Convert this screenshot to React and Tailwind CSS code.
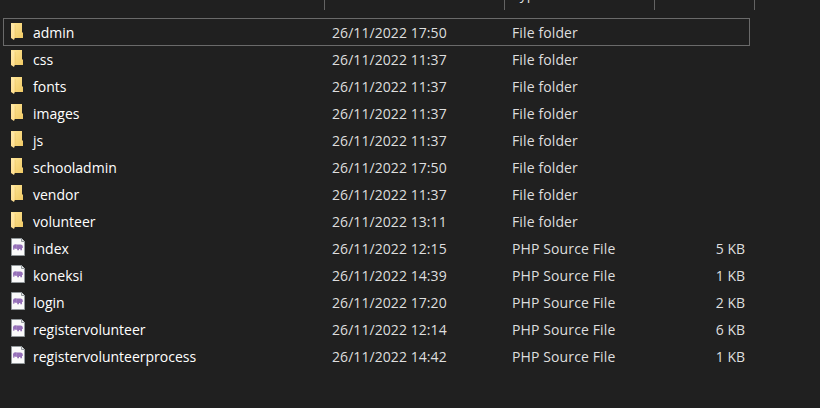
const files = [
  { name: "admin", date: "26/11/2022 17:50", selected: true },
  { name: "css", date: "26/11/2022 11:37" },
  { name: "fonts", date: "26/11/2022 11:37" },
  { name: "images", date: "26/11/2022 11:37" },
  { name: "js", date: "26/11/2022 11:37" },
  { name: "schooladmin", date: "26/11/2022 17:50" },
  { name: "vendor", date: "26/11/2022 11:37" },
  { name: "volunteer", date: "26/11/2022 13:11" },
  { name: "index", date: "26/11/2022 12:15", size: "5 KB" },
  { name: "koneksi", date: "26/11/2022 14:39", size: "1 KB" },
  { name: "login", date: "26/11/2022 17:20", size: "2 KB" },
  { name: "registervolunteer", date: "26/11/2022 12:14", size: "6 KB" },
  { name: "registervolunteerprocess", date: "26/11/2022 14:42", size: "1 KB" },
];

function FolderIcon() {
  return (
    <svg width="15" height="18" viewBox="0 0 15 18" className="block">
      <defs>
        <linearGradient id="folder-back" x1="0" y1="0" x2="1" y2="1">
          <stop offset="0" stopColor="#ffe596" />
          <stop offset="1" stopColor="#f0ca66" />
        </linearGradient>
        <linearGradient id="folder-flap" x1="0" y1="0" x2="0" y2="1">
          <stop offset="0" stopColor="#ffe9aa" />
          <stop offset="1" stopColor="#ffdf91" />
        </linearGradient>
      </defs>
      <path d="M0 0H11V9L12 10V15H0Z" fill="url(#folder-back)" />
      <path d="M0 0L4 2V14.5L3 17L0 15Z" fill="url(#folder-flap)" />
      <path d="M4 2V15" stroke="#e6bd56" strokeWidth=".5" />
    </svg>
  );
}

function PhpIcon() {
  return (
    <svg width="15" height="18" viewBox="0 0 15 18" className="block">
      <path d="M.5.5H10.5L13.5 3.5V17.5H.5Z" fill="#fafafa" stroke="#92989b" />
      <path d="M10.5.5V3.5H13.5" fill="#e5e7e8" stroke="#92989b" />
      <path
        d="M2 8.2Q2.3 6.4 4.2 6.2L6 6.5H9.5Q11.7 6.7 11.8 8.5V10H11V12.3H9.3V11H8V12.3H6.2V10.8H4.3L3.6 10.2L3.3 11.8H2.2Z"
        fill="#9570b8"
      />
      <path d="M5.6 7V9.3L4.6 10" fill="none" stroke="#b596cf" strokeWidth=".5" />
    </svg>
  );
}

function FileRow({ file }) {
  return (
    <div
      className={`-mb-px flex h-7 w-[747px] items-start border ${
        file.selected ? "border-[#6a6a6a]" : "border-transparent"
      }`}
    >
      <div className={`w-[29px] pl-[7px] ${file.size ? "pt-[3px]" : "pt-1"}`}>
        {file.size ? <PhpIcon /> : <FolderIcon />}
      </div>
      <div className="w-[299px] pt-1 text-white">{file.name}</div>
      <div className="w-[180px] pt-1 tracking-[0.07px] text-[#dedede]">{file.date}</div>
      <div className="w-[150px] pt-1 tracking-[0.12px] text-[#dedede]">
        {file.size ? "PHP Source File" : "File folder"}
      </div>
      <div className="w-[83px] pt-1 text-right text-[#dedede]">{file.size}</div>
    </div>
  );
}

export default function App() {
  return (
    <main className="h-[408px] w-[820px] overflow-hidden bg-[#202020] font-['Open_Sans','Noto_Sans',sans-serif] text-[14px] leading-5 whitespace-nowrap">
      <header className="flex h-[10px] text-[#dedede]">
        <div className="w-[325px] border-r border-[#636363]" />
        <div className="w-[180px] border-r border-[#636363]" />
        <div className="w-[150px] border-r border-[#636363] pl-[7px]">
          <div className="-mt-4">Type</div>
        </div>
        <div className="w-[100px] border-r border-[#636363]" />
      </header>
      <section className="mt-2 ml-[3px]">
        {files.map((file) => (
          <FileRow key={file.name} file={file} />
        ))}
      </section>
    </main>
  );
}
